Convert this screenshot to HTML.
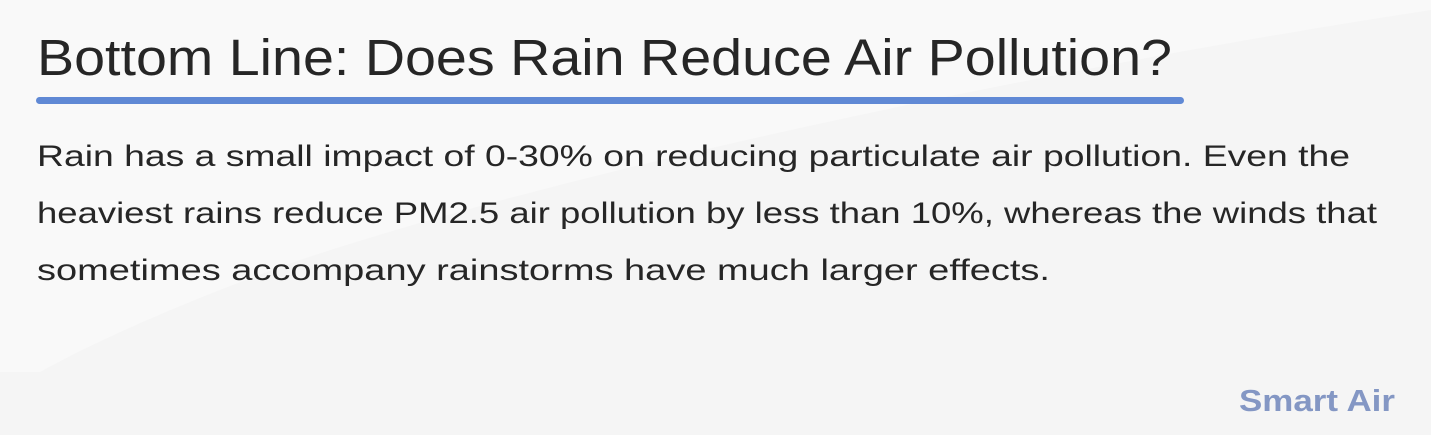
<!DOCTYPE html>
<html><head><meta charset="utf-8"><style>
html,body{margin:0;padding:0;width:1431px;height:435px;overflow:hidden;background:#f4f4f4}
svg{display:block}
</style></head><body>
<svg width="1431" height="435" viewBox="0 0 1431 435" xmlns="http://www.w3.org/2000/svg">
<rect width="1431" height="435" fill="#f5f5f5"/>
<path d="M0 0 H1431 V10 C1100 60 600 160 300 260 C160 310 80 350 40 372 H0 Z" fill="#f9f9f9"/>
<text x="37" y="75" font-family="Liberation Sans, sans-serif" font-size="51" fill="#262626" textLength="1135" lengthAdjust="spacingAndGlyphs">Bottom Line: Does Rain Reduce Air Pollution?</text>
<rect x="36" y="97" width="1148" height="7" rx="3.5" fill="#6089d5"/>
<g font-family="Liberation Sans, sans-serif" font-size="30" fill="#262626">
<text x="37" y="166" textLength="1313" lengthAdjust="spacingAndGlyphs">Rain has a small impact of 0-30% on reducing particulate air pollution. Even the</text>
<text x="37" y="223" textLength="1340" lengthAdjust="spacingAndGlyphs">heaviest rains reduce PM2.5 air pollution by less than 10%, whereas the winds that</text>
<text x="37" y="280" textLength="1013" lengthAdjust="spacingAndGlyphs">sometimes accompany rainstorms have much larger effects.</text>
</g>
<text x="1239" y="411" font-family="Liberation Sans, sans-serif" font-weight="bold" font-size="31" fill="#8497c4" textLength="156" lengthAdjust="spacingAndGlyphs">Smart Air</text>
</svg>
</body></html>
